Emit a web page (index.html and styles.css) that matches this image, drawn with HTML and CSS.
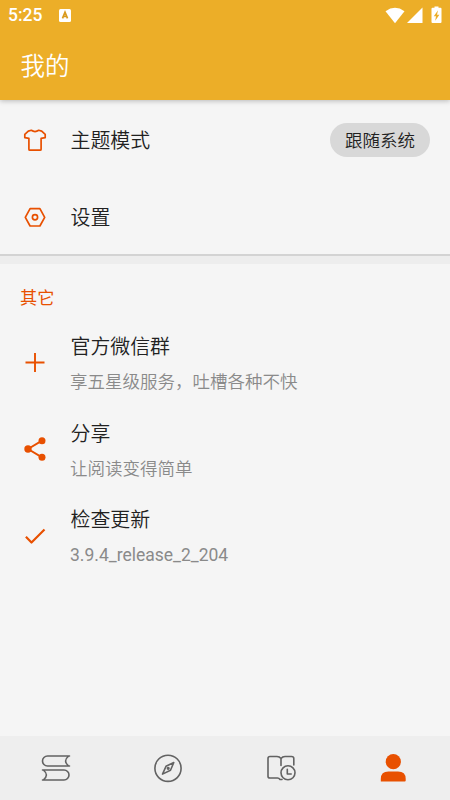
FILE: index.html
```html
<!DOCTYPE html>
<html lang="zh-CN">
<head>
<meta charset="utf-8">
<title>我的</title>
<link rel="stylesheet" href="styles.css">
</head>
<body>
<header class="header">
  <div class="status">
    <span class="time">5:25</span>
    <svg class="app-badge" width="12" height="13" viewBox="0 0 12 13"><rect width="12" height="13" rx="1.5" fill="#fff"/><path d="M3.500 9.300 6 3.300 8.500 9.300M4.400 7.500h3.200" fill="none" stroke="#d99a1c" stroke-width="1.700"/></svg>
    <svg class="signals" width="58" height="18" viewBox="0 0 58 18" fill="#fff"><path d="M.5 5.300Q10 -1.600 19.500 5.300L10 17.200Z"/><path d="M22 17 37.500 1.500V17Z"/><path d="M49.500 .5h4v1.300h2q1 0 1 1V16q0 1-1 1h-8q-1 0-1-1V2.800q0-1 1-1h2Z"/><path d="M53 4.300 48.800 10.200h2.200L50.200 14.800 54.400 8.700H52Z" fill="#ecae28"/></svg>
  </div>
  <h1 class="title">我的</h1>
</header>
<main class="content">
  <section class="general">
    <div class="row">
      <svg class="icon" viewBox="0 0 28 28"><path d="M10.300 4.300Q14 6.900 17.700 4.300L20.700 5.100 24.200 8.300V11.700L20.100 12.400V23.200Q20.100 24.200 19.100 24.200H8.900Q7.900 24.200 7.900 23.200V12.400L3.800 11.700V8.300L7.300 5.100Z"/></svg>
      <span class="name">主题模式</span>
      <span class="chip">跟随系统</span>
    </div>
    <div class="row">
      <svg class="icon" viewBox="0 0 28 28"><path d="M9.100 5.600H18.900L23.700 14.300 18.900 23H9.100L4.300 14.300Z"/><circle cx="14" cy="14.300" r="2.600"/></svg>
      <span class="name">设置</span>
    </div>
  </section>
  <div class="divider"></div>
  <section class="others">
    <h2 class="group">其它</h2>
    <div class="item">
      <svg class="icon" viewBox="0 0 28 28"><path d="M14 4V23M4.500 13.500H23.500" stroke-width="1.900"/></svg>
      <div><div class="name">官方微信群</div><div class="detail">享五星级服务，吐槽各种不快</div></div>
    </div>
    <div class="item">
      <svg class="icon" viewBox="0 0 28 28"><path d="M21 5.700 7 14 21 22.300" stroke-width="2"/><g fill="#e85000" stroke="none"><circle cx="21" cy="5.700" r="3.500"/><circle cx="7" cy="14" r="3.700"/><circle cx="21" cy="22.300" r="3.500"/></g></svg>
      <div><div class="name">分享</div><div class="detail">让阅读变得简单</div></div>
    </div>
    <div class="item">
      <svg class="icon" viewBox="0 0 28 28"><path d="M4.900 14.800 10.500 20.500 23.500 7.500" stroke-width="2.200"/></svg>
      <div><div class="name">检查更新</div><div class="detail version">3.9.4_release_2_204</div></div>
    </div>
  </section>
</main>
<nav class="tabs">
  <a class="tab"><svg width="30" height="30" viewBox="0 0 30 30"><path d="M28.500 3H6.500A5 5 0 0 0 6.500 13H28.500M27.700 3Q21.500 8 27.700 13M1.500 17H23A5 5 0 0 1 23 27H1.500M2.300 17Q8.500 22 2.300 27"/></svg></a>
  <a class="tab"><svg width="30" height="30" viewBox="0 0 30 30"><circle cx="15" cy="15.300" r="13.100"/><path d="M20.800 9.500 17.500 17.300 9.500 21.100 13 13.300Z"/><circle cx="15.200" cy="15.300" r=".8"/></svg></a>
  <a class="tab"><svg width="30" height="30" viewBox="0 0 30 30"><path d="M15 12.500V5.500Q13.500 3.500 11 3.500H4Q2 3.500 2 5.500V23.500Q2 25 4 25H11.500Q13 25 14 26.500H16M15 5.500Q16.500 3.500 19 3.500H25.500Q27.800 3.500 27.800 5.500V12"/><circle cx="22" cy="19.800" r="7"/><path d="M21.300 16.300V21H25.200"/></svg></a>
  <a class="tab"><svg class="active" width="30" height="30" viewBox="0 0 30 30"><circle cx="15.300" cy="8.700" r="7.600"/><path d="M2.800 28.500V26Q2.800 18.600 10.500 18.600H20Q27.700 18.600 27.700 26V27.500Q27.700 28.500 26.700 28.500Z"/></svg></a>
</nav>
</body>
</html>
```
FILE: styles.css
```css
* { box-sizing: border-box; }
body {
  margin: 0;
  height: 800px;
  display: flex;
  flex-direction: column;
  overflow: hidden;
  background: #f5f5f5;
  color: #212121;
  font-family: Roboto, "Noto Sans CJK SC", sans-serif;
}
h1, h2 { margin: 0; font-weight: 400; }
.header {
  height: 100px;
  flex: none;
  background: #ecae28;
  color: #fff;
  box-shadow: 0 1px 5px rgba(0, 0, 0, .25);
}
.status { height: 30px; display: flex; align-items: center; padding: 0 7px 0 8px; }
.time { font-size: 17.5px; font-weight: 500; width: 51px; }
.app-badge { margin-top: 1px; }
.signals { margin-left: auto; margin-top: -1px; }
.title { font-size: 24.5px; line-height: 74px; padding-left: 20.5px; font-weight: 350; }
.content { flex: 1; }
.general { height: 154px; padding-top: 1px; }
.row { height: 77px; display: flex; align-items: center; padding: 0 20px 0 21px; }
.icon {
  width: 28px;
  height: 28px;
  flex: none;
  margin-right: 21.5px;
  fill: none;
  stroke: #e85000;
  stroke-width: 1.7;
  stroke-linejoin: round;
}
.name { font-size: 19.9px; line-height: 30px; font-weight: 350; }
.row .name { padding-top: 4px; }
.chip {
  margin-left: auto;
  width: 100px;
  height: 34px;
  border-radius: 17px;
  background: #d8d8d8;
  font-size: 17.5px;
  line-height: 36px;
  font-weight: 350;
  text-align: center;
}
.divider { height: 10px; border-top: 2px solid #d3d3d3; background: #ededed; }
.group { height: 56px; padding: 21px 20px 0; font-size: 17.2px; line-height: 26px; color: #e85000; }
.item { height: 86.6px; display: flex; align-items: center; padding-left: 21px; }
.item .icon { margin-top: -1px; }
.item .name { padding-top: 2px; margin-bottom: -2px; }
.detail { margin: 8px 0 0 -.5px; font-size: 17.5px; line-height: 26px; font-weight: 350; color: #8a8a8a; white-space: nowrap; }
.version { font-weight: 400; }
.tabs { height: 64px; flex: none; display: grid; grid-template-columns: repeat(4, 1fr); background: #eee; }
.tab { display: flex; align-items: center; justify-content: center; padding-right: 1px; }
.tab svg { fill: none; stroke: #626262; stroke-width: 1.6; stroke-linecap: round; stroke-linejoin: round; }
.tab .active { fill: #e85000; stroke: none; }
```
